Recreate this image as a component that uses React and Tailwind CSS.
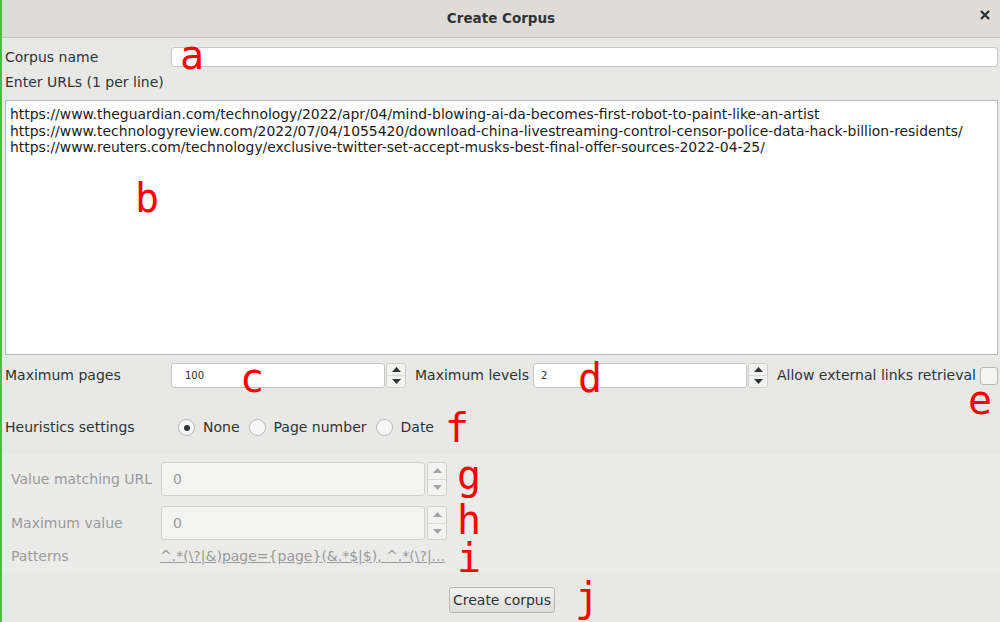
import { useState } from 'react'

const urls = [
    'https://www.theguardian.com/technology/2022/apr/04/mind-blowing-ai-da-becomes-first-robot-to-paint-like-an-artist',
    'https://www.technologyreview.com/2022/07/04/1055420/download-china-livestreaming-control-censor-police-data-hack-billion-residents/',
    'https://www.reuters.com/technology/exclusive-twitter-set-accept-musks-best-final-offer-sources-2022-04-25/',
]

function SpinArrows({ disabled, tall }) {
    const col = disabled ? 'text-[#a5a5a5]' : 'text-[#2e3436]'
    return (
        <div className={`flex flex-col w-[20px] ${tall ? 'h-[34px]' : 'h-[25px]'} border border-[#cfcfcd] rounded-[3px] bg-[#f3f3f2] ${col}`}>
            <div className="flex-1 flex items-center justify-center border-b border-[#dadad8]">
                <svg width="9" height="5" viewBox="0 0 9 5"><path d="M0 5 L4.5 0 L9 5 Z" fill="currentColor" /></svg>
            </div>
            <div className="flex-1 flex items-center justify-center">
                <svg width="9" height="5" viewBox="0 0 9 5"><path d="M0 0 L4.5 5 L9 0 Z" fill="currentColor" /></svg>
            </div>
        </div>
    )
}

function Radio({ checked, label }) {
    return (
        <label className="flex items-center gap-[8px]">
            <span className="w-[17px] h-[17px] rounded-full border border-[#b8b8b6] bg-[#f7f7f7] flex items-center justify-center">
                {checked && <span className="w-[6px] h-[6px] rounded-full bg-[#2e3436]" />}
            </span>
            <span>{label}</span>
        </label>
    )
}

function Mark({ children, className }) {
    return (
        <span className={`absolute text-[#ff0000] text-[40px] leading-none pointer-events-none ${className}`} style={{ fontFamily: '"DejaVu Sans Mono", monospace' }}>
            {children}
        </span>
    )
}

export default function App() {
    const [heur, setHeur] = useState('none')

    return (
        <div className="relative w-[1000px] h-[622px] bg-[#e8e8e7] border-l-2 border-[#3ec33e] text-[14px] text-[#2e3436] overflow-hidden flex flex-col" style={{ fontFamily: '"DejaVu Sans", sans-serif' }}>
            {/* Titre */}
            <div className="h-[38px] shrink-0 bg-[#dfdcd8] border-b border-[#c9c6c2] flex items-center justify-center relative">
                <span className="font-bold text-[13.5px] text-[#2e3436]">Create Corpus</span>
                <span className="absolute right-[9px] top-[9px] text-[#2e3436]">
                    <svg width="12" height="12" viewBox="0 0 12 12"><path d="M2 2 L10 10 M10 2 L2 10" stroke="currentColor" strokeWidth="2.4" /></svg>
                </span>
            </div>

            <div className="flex flex-col pl-[3px] pr-[2px]">
                {/* Corpus name */}
                <div className="flex items-center h-[28px] mt-[5px]">
                    <span className="w-[166px]">Corpus name</span>
                    <div className="flex-1 h-[20px] bg-white border border-[#c6c6c4] rounded-[3px]" />
                </div>
                <div className="h-[22px] flex items-center">Enter URLs (1 per line)</div>

                {/* URLs */}
                <div className="mt-[7px] h-[255px] bg-white border border-[#b9b9b7] px-[4px] pt-[5px] leading-[16.5px] text-[13.9px] whitespace-nowrap overflow-hidden text-[#1c1c1c]">
                    {urls.map(u => <div key={u}>{u}</div>)}
                </div>

                {/* Pages / levels */}
                <div className="flex items-center h-[25px] mt-[8px]">
                    <span className="w-[166px]">Maximum pages</span>
                    <div className="w-[214px] h-[25px] bg-white border border-[#c6c6c4] rounded-[3px] flex items-center pl-[13px] text-[10px] text-[#333]">100</div>
                    <div className="ml-[1px]"><SpinArrows /></div>
                    <span className="ml-[9px] w-[118px]">Maximum levels</span>
                    <div className="w-[214px] h-[25px] bg-white border border-[#c6c6c4] rounded-[3px] flex items-center pl-[7px] text-[10px] text-[#333]">2</div>
                    <div className="ml-[1px]"><SpinArrows /></div>
                    <span className="ml-[9px] whitespace-nowrap">Allow external links retrieval</span>
                    <span className="ml-[4px] w-[18px] h-[18px] shrink-0 border border-[#b8b8b6] rounded-[3px] bg-[#f4f4f3]" />
                </div>

                {/* Heuristics */}
                <div className="flex items-center h-[25px] mt-[27px]">
                    <span className="w-[173px]">Heuristics settings</span>
                    <div className="flex items-center gap-[9px]" onClick={() => setHeur(heur)}>
                        <Radio checked label="None" />
                        <Radio label="Page number" />
                        <Radio label="Date" />
                    </div>
                </div>
            </div>

            {/* Section desactivee */}
            <div className="mt-[14px] bg-[#ebebea] h-[119px] flex flex-col pl-[9px] pt-[8px] text-[#9a9a9a]">
                <div className="flex items-center h-[34px]">
                    <span className="w-[150px]">Value matching URL</span>
                    <div className="w-[264px] h-[34px] bg-[#f3f3f2] border border-[#cfcfcd] rounded-[3px] flex items-center pl-[11px]">0</div>
                    <div className="ml-[2px]"><SpinArrows disabled tall /></div>
                </div>
                <div className="flex items-center h-[34px] mt-[10px]">
                    <span className="w-[150px]">Maximum value</span>
                    <div className="w-[264px] h-[34px] bg-[#f3f3f2] border border-[#cfcfcd] rounded-[3px] flex items-center pl-[11px]">0</div>
                    <div className="ml-[2px]"><SpinArrows disabled tall /></div>
                </div>
                <div className="flex items-center h-[20px] mt-[6px]">
                    <span className="w-[149px]">Patterns</span>
                    <span className="underline whitespace-nowrap">^.*(\?|&amp;)page={'{page}'}(&amp;.*$|$), ^.*(\?|...</span>
                </div>
            </div>

            {/* Bouton */}
            <div className="flex justify-center mt-[14px]">
                <button className="ml-[2px] h-[26px] px-[3px] bg-gradient-to-b from-[#f2f2f1] to-[#dcdcda] border border-[#b6b6b4] rounded-[3px] text-[#2e3436]">Create corpus</button>
            </div>

            {/* Annotations */}
            <Mark className="left-[178px] top-[35px]">a</Mark>
            <Mark className="left-[133px] top-[178px]">b</Mark>
            <Mark className="left-[238px] top-[358px]">c</Mark>
            <Mark className="left-[576px] top-[358px]">d</Mark>
            <Mark className="left-[966px] top-[380px]">e</Mark>
            <Mark className="left-[443px] top-[408px]">f</Mark>
            <Mark className="left-[455px] top-[455px]">g</Mark>
            <Mark className="left-[455px] top-[500px]">h</Mark>
            <Mark className="left-[455px] top-[538px]">i</Mark>
            <Mark className="left-[573px] top-[577px]">j</Mark>
        </div>
    )
}
